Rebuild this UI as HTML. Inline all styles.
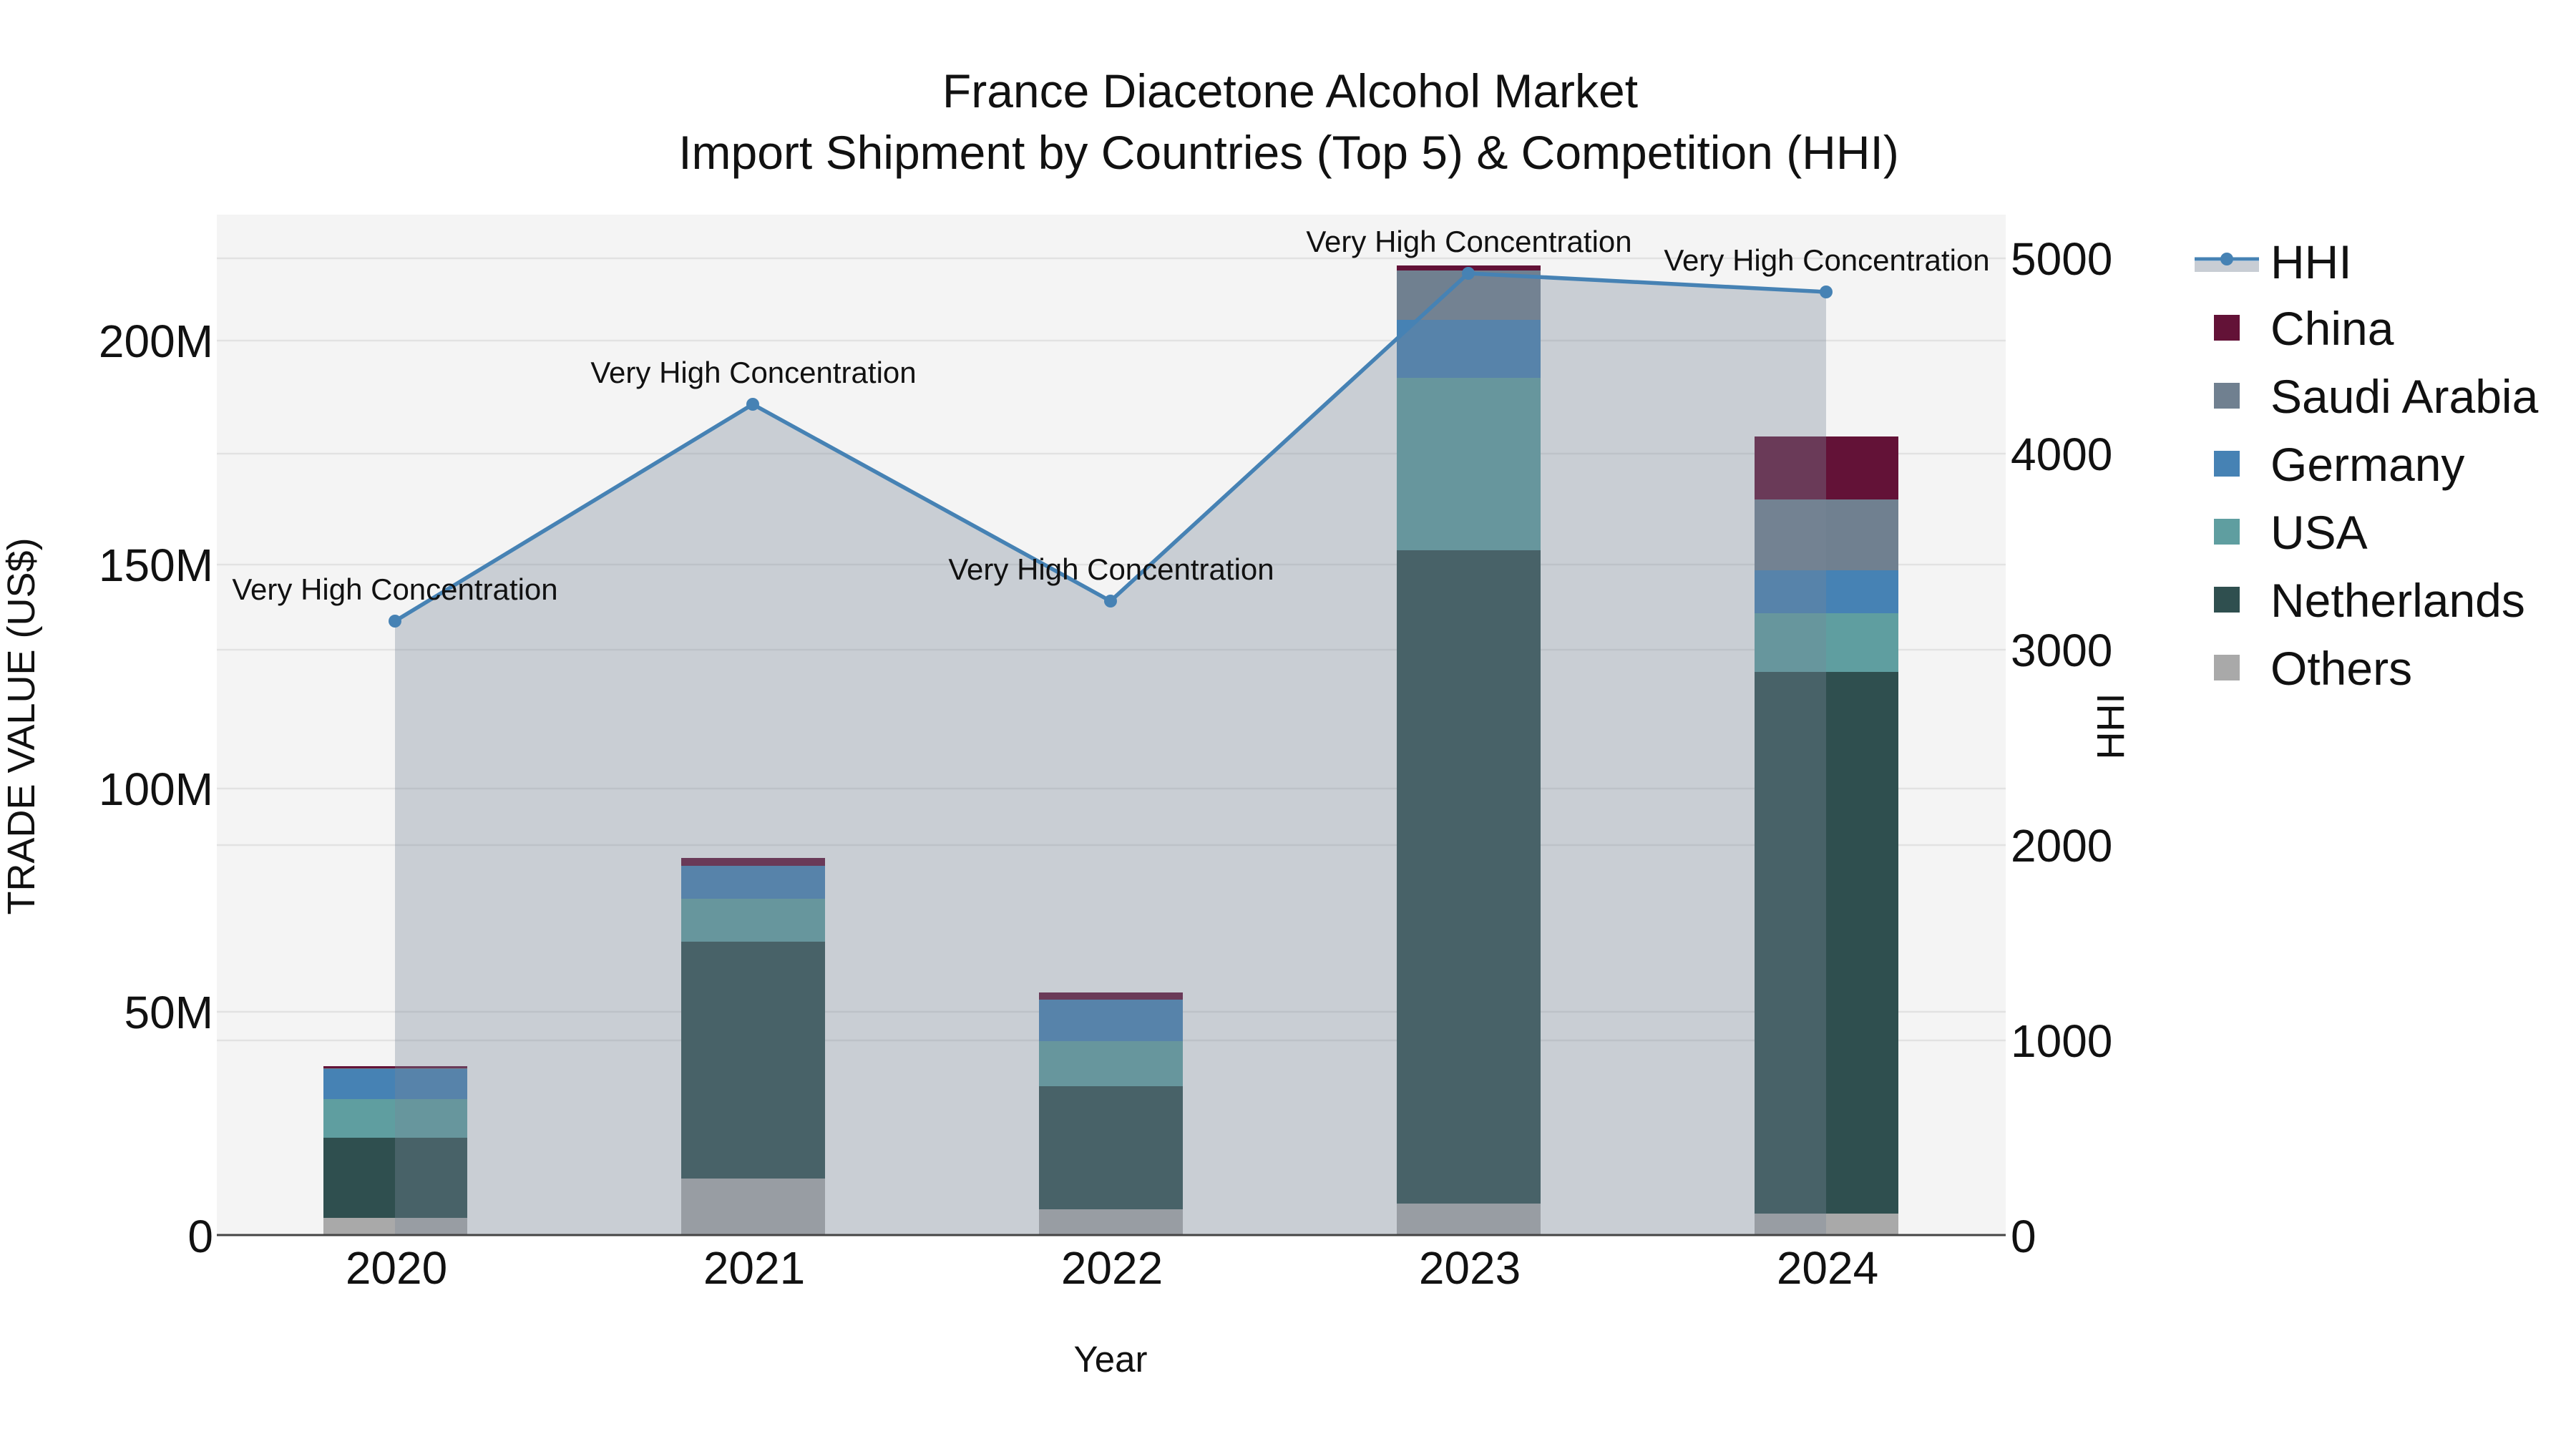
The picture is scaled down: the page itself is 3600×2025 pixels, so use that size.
<!DOCTYPE html>
<html><head><meta charset="utf-8"><style>
html,body{margin:0;padding:0;background:#fff;}
svg{display:block;font-family:"Liberation Sans",sans-serif;}
</style></head><body>
<svg width="3600" height="2025" viewBox="0 0 3600 2025" xmlns="http://www.w3.org/2000/svg">
<rect x="0" y="0" width="3600" height="2025" fill="#fff"/>
<text x="1803" y="150" font-size="66" text-anchor="middle" fill="#111">France Diacetone Alcohol Market</text>
<text x="1801" y="236" font-size="66" text-anchor="middle" fill="#111">Import Shipment by Countries (Top 5) &amp; Competition (HHI)</text>
<rect x="303" y="300" width="2500" height="1427" fill="#f4f4f4"/>
<g stroke="#e2e2e2" stroke-width="2.5">
<line x1="303" x2="2803" y1="1414" y2="1414"/><line x1="303" x2="2803" y1="1102" y2="1102"/>
<line x1="303" x2="2803" y1="789" y2="789"/><line x1="303" x2="2803" y1="476" y2="476"/>
<line x1="303" x2="2803" y1="1454" y2="1454"/><line x1="303" x2="2803" y1="1181" y2="1181"/>
<line x1="303" x2="2803" y1="908" y2="908"/><line x1="303" x2="2803" y1="634" y2="634"/>
<line x1="303" x2="2803" y1="361" y2="361"/>
</g>
<g>
<rect x="452" y="1702" width="201" height="25" fill="#a9a9a9"/>
<rect x="452" y="1590" width="201" height="112" fill="#2f4f4f"/>
<rect x="452" y="1536" width="201" height="54" fill="#5f9ea0"/>
<rect x="452" y="1494" width="201" height="42" fill="#4682b4"/>
<rect x="452" y="1492" width="201" height="2" fill="#708090"/>
<rect x="452" y="1490" width="201" height="3" fill="#631237"/>

<rect x="952" y="1647" width="201" height="80" fill="#a9a9a9"/>
<rect x="952" y="1316" width="201" height="331" fill="#2f4f4f"/>
<rect x="952" y="1256" width="201" height="60" fill="#5f9ea0"/>
<rect x="952" y="1210" width="201" height="46" fill="#4682b4"/>
<rect x="952" y="1199" width="201" height="11" fill="#631237"/>

<rect x="1452" y="1690" width="201" height="37" fill="#a9a9a9"/>
<rect x="1452" y="1518" width="201" height="172" fill="#2f4f4f"/>
<rect x="1452" y="1455" width="201" height="63" fill="#5f9ea0"/>
<rect x="1452" y="1397" width="201" height="58" fill="#4682b4"/>
<rect x="1452" y="1387" width="201" height="10" fill="#631237"/>

<rect x="1952" y="1682" width="201" height="45" fill="#a9a9a9"/>
<rect x="1952" y="769" width="201" height="913" fill="#2f4f4f"/>
<rect x="1952" y="528" width="201" height="241" fill="#5f9ea0"/>
<rect x="1952" y="447" width="201" height="81" fill="#4682b4"/>
<rect x="1952" y="378" width="201" height="69" fill="#708090"/>
<rect x="1952" y="371" width="201" height="7" fill="#631237"/>

<rect x="2452" y="1696" width="201" height="31" fill="#a9a9a9"/>
<rect x="2452" y="939" width="201" height="757" fill="#2f4f4f"/>
<rect x="2452" y="857" width="201" height="82" fill="#5f9ea0"/>
<rect x="2452" y="797" width="201" height="60" fill="#4682b4"/>
<rect x="2452" y="698" width="201" height="99" fill="#708090"/>
<rect x="2452" y="610" width="201" height="88" fill="#631237"/>
</g>
<polygon points="552,1727 552,868 1052,565 1552,840 2052,382 2552,408 2552,1727" fill="rgba(119,134,153,0.35)"/>
<line x1="303" x2="2803" y1="1726" y2="1726" stroke="#444" stroke-width="3"/>
<polyline points="552,868 1052,565 1552,840 2052,382 2552,408" fill="none" stroke="#4682b4" stroke-width="5.5" stroke-linejoin="round"/>
<g fill="#4682b4">
<circle cx="552" cy="868" r="9"/><circle cx="1052" cy="565" r="9"/><circle cx="1552" cy="840" r="9"/><circle cx="2052" cy="382" r="9"/><circle cx="2552" cy="408" r="9"/>
</g>
<g font-size="42" text-anchor="middle" fill="#111">
<text x="552" y="838">Very High Concentration</text>
<text x="1053" y="535">Very High Concentration</text>
<text x="1553" y="810">Very High Concentration</text>
<text x="2053" y="352">Very High Concentration</text>
<text x="2553" y="378">Very High Concentration</text>
</g>
<g font-size="64" text-anchor="end" fill="#111">
<text x="298" y="1750">0</text>
<text x="298" y="1437">50M</text>
<text x="298" y="1125">100M</text>
<text x="298" y="812">150M</text>
<text x="298" y="499">200M</text>
</g>
<g font-size="64" text-anchor="start" fill="#111">
<text x="2810" y="1750">0</text>
<text x="2810" y="1477">1000</text>
<text x="2810" y="1204">2000</text>
<text x="2810" y="931">3000</text>
<text x="2810" y="657">4000</text>
<text x="2810" y="384">5000</text>
</g>
<g font-size="64" text-anchor="middle" fill="#111">
<text x="554" y="1794">2020</text><text x="1054" y="1794">2021</text><text x="1554" y="1794">2022</text><text x="2054" y="1794">2023</text><text x="2554" y="1794">2024</text>
</g>
<text x="1552" y="1917" font-size="51" text-anchor="middle" fill="#111">Year</text>
<text transform="translate(48,1015) rotate(-90)" font-size="54" text-anchor="middle" fill="#111">TRADE VALUE (US$)</text>
<text transform="translate(2968,1015) rotate(-90)" font-size="54" text-anchor="middle" fill="#111">HHI</text>
<rect x="3067" y="365" width="90" height="15" fill="#c8cdd4"/>
<line x1="3067" x2="3157" y1="362" y2="362" stroke="#4682b4" stroke-width="5"/>
<circle cx="3112" cy="362" r="9" fill="#4682b4"/>
<rect x="3094" y="440" width="36" height="36" fill="#631237"/>
<rect x="3094" y="535" width="36" height="36" fill="#708090"/>
<rect x="3094" y="630" width="36" height="36" fill="#4682b4"/>
<rect x="3094" y="725" width="36" height="36" fill="#5f9ea0"/>
<rect x="3094" y="820" width="36" height="36" fill="#2f4f4f"/>
<rect x="3094" y="915" width="36" height="36" fill="#a9a9a9"/>
<g font-size="66" fill="#111">
<text x="3173" y="389">HHI</text>
<text x="3173" y="482">China</text>
<text x="3173" y="577">Saudi Arabia</text>
<text x="3173" y="672">Germany</text>
<text x="3173" y="767">USA</text>
<text x="3173" y="862">Netherlands</text>
<text x="3173" y="957">Others</text>
</g>
</svg>
</body></html>
